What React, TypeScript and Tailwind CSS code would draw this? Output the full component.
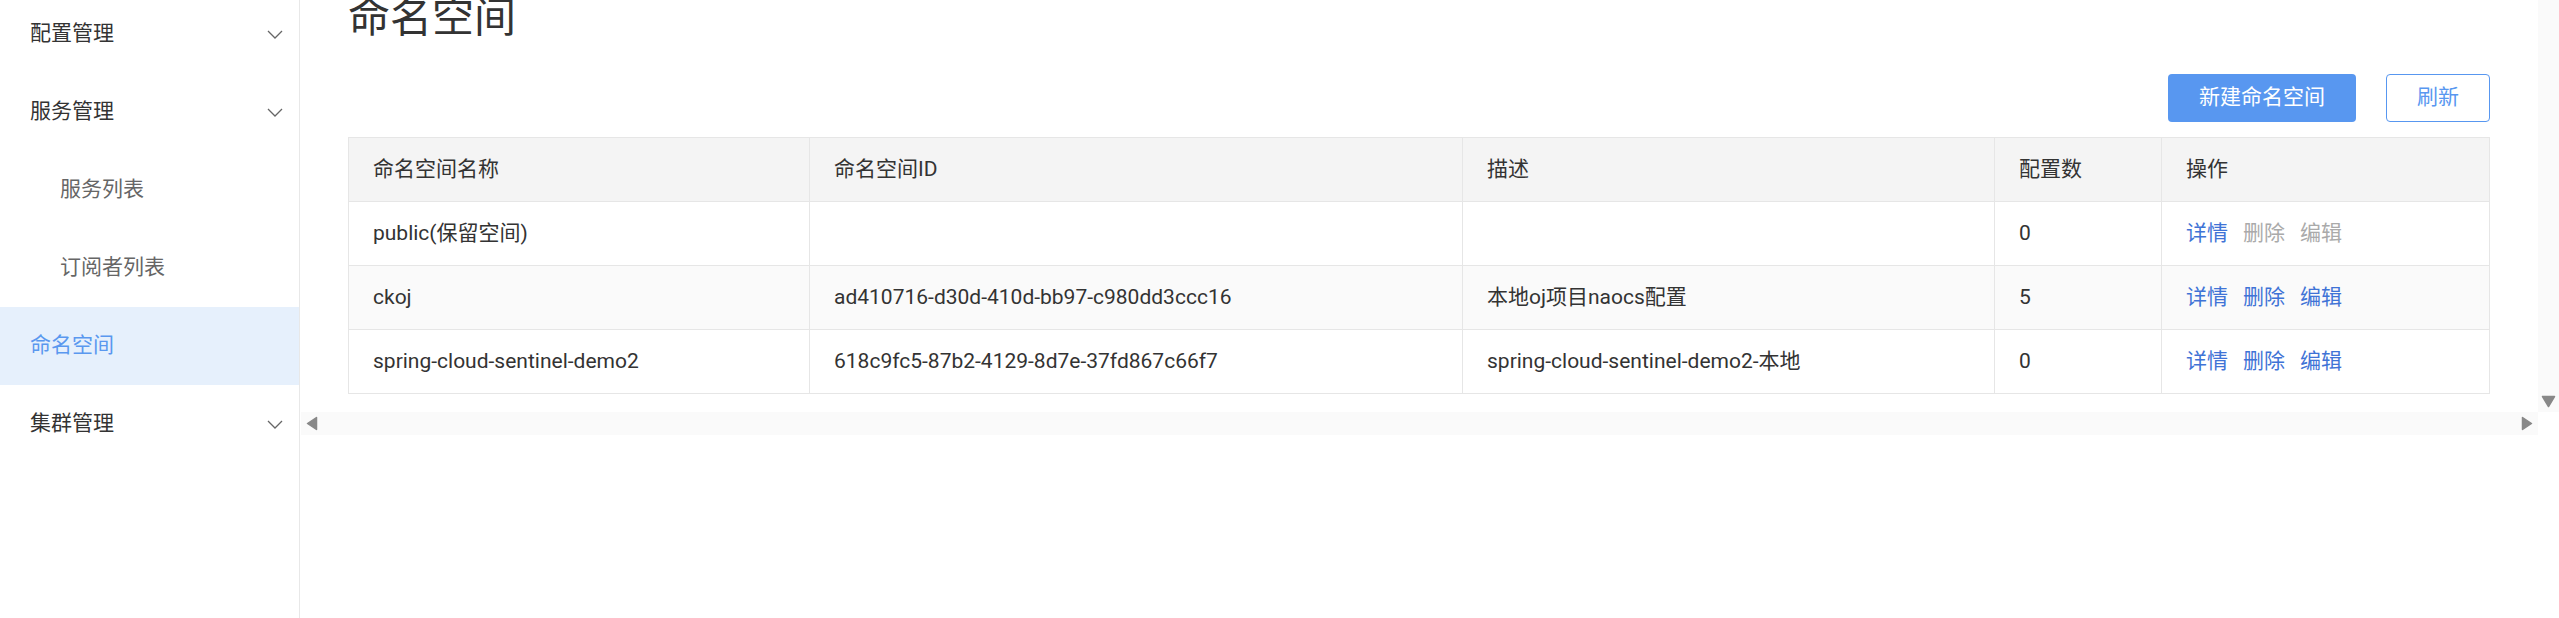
import React from 'react';

const menu = [
    { label: '配置管理', level: 1, arrow: true },
    { label: '服务管理', level: 1, arrow: true },
    { label: '服务列表', level: 2 },
    { label: '订阅者列表', level: 2 },
    { label: '命名空间', level: 1, active: true },
    { label: '集群管理', level: 1, arrow: true },
];

const rows = [
    { name: 'public(保留空间)', id: '', desc: '', count: '0', locked: true },
    { name: 'ckoj', id: 'ad410716-d30d-410d-bb97-c980dd3ccc16', desc: '本地oj项目naocs配置', count: '5' },
    { name: 'spring-cloud-sentinel-demo2', id: '618c9fc5-87b2-4129-8d7e-37fd867c66f7', desc: 'spring-cloud-sentinel-demo2-本地', count: '0' },
];

const Chevron = () => (
    <svg width="16" height="9" viewBox="0 0 16 9" fill="none">
        <polyline points="1,1 8,8 15,1" stroke="#666" strokeWidth="1.3" />
    </svg>
);

const Cell: React.FC<{ w: string; children?: React.ReactNode; last?: boolean }> = ({ w, children, last }) => (
    <div className={`${w} flex items-center px-[24px] ${last ? '' : 'border-r border-[#e6e6e6]'}`}>{children}</div>
);

export default function App() {
    return (
        <div className="flex h-[618px] overflow-hidden bg-white text-[21px] text-[#333] font-[family-name:Roboto,'Noto_Sans_CJK_SC',sans-serif]">
            {/* Sidebar */}
            <aside className="w-[300px] shrink-0 border-r border-[#e8e8e8]">
                <div className="-mt-[5px]">
                    {menu.map(item => (
                        <div
                            key={item.label}
                            className={`h-[78px] flex items-center justify-between pr-[16px] ${item.level === 2 ? 'pl-[60px] text-[#666]' : 'pl-[30px]'} ${item.active ? 'bg-[#e6f0fc] text-[#5a98ef]' : ''}`}
                        >
                            <span>{item.label}</span>
                            {item.arrow && <Chevron />}
                        </div>
                    ))}
                </div>
            </aside>

            {/* Main */}
            <div className="flex-1 flex flex-col">
                <div className="flex h-[412px]">
                    <div className="flex-1 px-[48px]">
                        <h1 className="text-[42px] leading-[42px] -mt-[3px] text-[#333]">命名空间</h1>
                        <div className="flex justify-end gap-[30px] mt-[35px]">
                            <button className="h-[48px] w-[188px] rounded-[4px] bg-[#5897f0] text-white">新建命名空间</button>
                            <button className="h-[48px] w-[104px] rounded-[4px] border border-[#5897f0] text-[#5897f0] bg-white">刷新</button>
                        </div>
                        <div className="mt-[15px] border-t border-l border-r border-[#e6e6e6]">
                            <div className="flex h-[64px] bg-[#f4f4f4] border-b border-[#e6e6e6]">
                                <Cell w="w-[461px]">命名空间名称</Cell>
                                <Cell w="w-[653px]">命名空间ID</Cell>
                                <Cell w="w-[532px]">描述</Cell>
                                <Cell w="w-[167px]">配置数</Cell>
                                <Cell w="flex-1" last>操作</Cell>
                            </div>
                            {rows.map((r, i) => (
                                <div key={r.name} className={`flex h-[64px] border-b border-[#e6e6e6] ${i === 1 ? 'bg-[#fafafa]' : 'bg-white'}`}>
                                    <Cell w="w-[461px]">{r.name}</Cell>
                                    <Cell w="w-[653px]">{r.id}</Cell>
                                    <Cell w="w-[532px]">{r.desc}</Cell>
                                    <Cell w="w-[167px]">{r.count}</Cell>
                                    <Cell w="flex-1" last>
                                        <div className="flex gap-[15px]">
                                            <span className="text-[#3f73d6]">详情</span>
                                            <span className={r.locked ? 'text-[#aaaaaa]' : 'text-[#3f73d6]'}>删除</span>
                                            <span className={r.locked ? 'text-[#aaaaaa]' : 'text-[#3f73d6]'}>编辑</span>
                                        </div>
                                    </Cell>
                                </div>
                            ))}
                        </div>
                    </div>
                    {/* vertical scrollbar */}
                    <div className="w-[21px] bg-[#fafafa] flex flex-col justify-end items-center pb-[4px]">
                        <svg width="15" height="13" viewBox="0 0 15 13">
                            <path d="M1.5 1.5 L13.5 1.5 L7.5 11.5 Z" fill="#888" stroke="#888" strokeWidth="1.5" strokeLinejoin="round" />
                        </svg>
                    </div>
                </div>
                {/* horizontal scrollbar */}
                <div className="h-[23px] mr-[21px] ml-[1px] bg-[#fafafa] flex items-center justify-between pl-[5px] pr-[5px]">
                    <svg width="12" height="15" viewBox="0 0 12 15">
                        <path d="M10.5 1.5 L10.5 13.5 L1.5 7.5 Z" fill="#888" stroke="#888" strokeWidth="1.5" strokeLinejoin="round" />
                    </svg>
                    <svg width="12" height="15" viewBox="0 0 12 15">
                        <path d="M1.5 1.5 L1.5 13.5 L10.5 7.5 Z" fill="#888" stroke="#888" strokeWidth="1.5" strokeLinejoin="round" />
                    </svg>
                </div>
            </div>
        </div>
    );
}
